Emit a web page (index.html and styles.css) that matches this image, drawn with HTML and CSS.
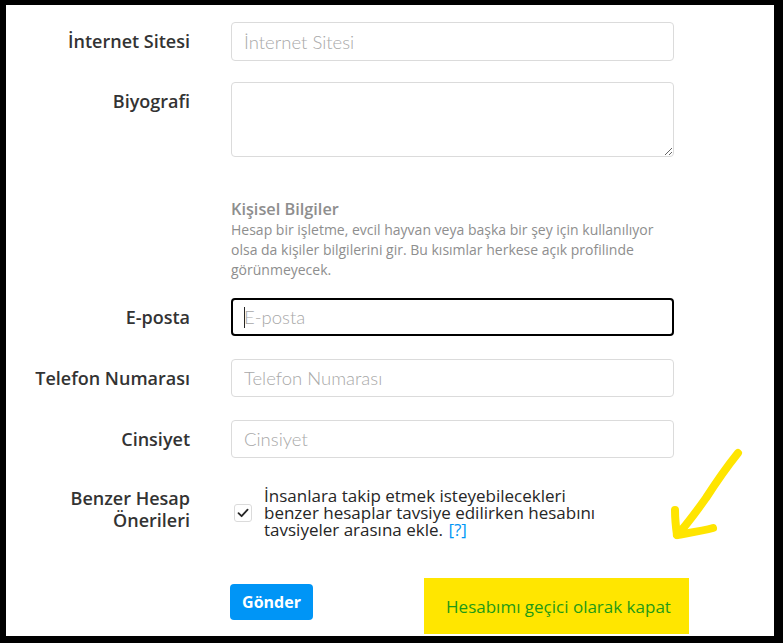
FILE: index.html
```html
<!DOCTYPE html>
<html lang="tr">
<head>
<meta charset="utf-8">
<title>Profili Düzenle</title>
<link rel="stylesheet" href="styles.css">
</head>
<body>
<div class="frame">
  <form class="form">
    <div class="row">
      <label class="lbl">İnternet Sitesi</label>
      <input class="inp" type="text" placeholder="İnternet Sitesi">
    </div>
    <div class="row row-bio">
      <label class="lbl">Biyografi</label>
      <textarea class="bio"></textarea>
    </div>
    <div class="row row-section">
      <div></div>
      <div class="section">
        <div class="sec-title">Kişisel Bilgiler</div>
        <div class="sec-desc">Hesap bir işletme, evcil hayvan veya başka bir şey için kullanılıyor olsa da kişiler bilgilerini gir. Bu kısımlar herkese açık profilinde görünmeyecek.</div>
      </div>
    </div>
    <div class="row row-mail">
      <label class="lbl">E-posta</label>
      <div class="field">
        <input class="inp inp-focus" type="text" placeholder="E-posta">
        <span class="caret"></span>
      </div>
    </div>
    <div class="row row-gap">
      <label class="lbl">Telefon Numarası</label>
      <input class="inp" type="text" placeholder="Telefon Numarası">
    </div>
    <div class="row row-gap">
      <label class="lbl">Cinsiyet</label>
      <input class="inp" type="text" placeholder="Cinsiyet">
    </div>
    <div class="row row-check">
      <label class="lbl lbl-multi">Benzer Hesap<br>Önerileri</label>
      <div class="check">
        <span class="box">
          <svg width="14" height="14" viewBox="0 0 14 14"><path d="M2.5 7.2 L5.6 10.2 L11.6 3.6" fill="none" stroke="#262626" stroke-width="1.8" stroke-linecap="round" stroke-linejoin="round"/></svg>
        </span>
        <span class="check-text">İnsanlara takip etmek isteyebilecekleri benzer hesaplar tavsiye edilirken hesabını tavsiyeler arasına ekle. <a class="help" href="#">[?]</a></span>
      </div>
    </div>
    <div class="row row-foot">
      <div></div>
      <div class="foot">
        <button class="send" type="button">Gönder</button>
        <a class="close" href="#">Hesabımı geçici olarak kapat</a>
      </div>
    </div>
  </form>
  <svg class="arrow" width="90" height="100" viewBox="0 0 90 100">
    <path d="M78 11 C66 26 55 42 46 56 C36 70 26 84 17 93" fill="none" stroke="#ffe500" stroke-width="8" stroke-linecap="round"/>
    <path d="M15 68 C15 78 16 86 17 93 C28 91 42 89 53 86" fill="none" stroke="#ffe500" stroke-width="8" stroke-linecap="round" stroke-linejoin="round"/>
  </svg>
</div>
</body>
</html>
```
FILE: styles.css
```css
html, body {
  margin: 0;
  padding: 0;
  background: #000;
}
body {
  width: 783px;
  height: 643px;
  overflow: hidden;
}
.frame {
  position: relative;
  margin: 5px 9px 0 6px;
  height: 631px;
  background: #fff;
  font-family: "Open Sans", "Noto Sans", sans-serif;
  color: #262626;
}
.form {
  padding-top: 17px;
}
.row {
  display: grid;
  grid-template-columns: 184px 443px;
  column-gap: 41px;
  align-items: start;
}
.lbl {
  font-size: 18px;
  font-weight: 600;
  text-align: right;
  line-height: 39px;
  color: #333;
}
.inp {
  box-sizing: border-box;
  width: 443px;
  height: 39px;
  margin: 0;
  padding: 0 12px;
  border: 1px solid #dbdbdb;
  border-radius: 4px;
  background: #fff;
  font-family: "Lato", sans-serif;
  font-weight: 300;
  font-size: 18.5px;
  color: #262626;
  outline: none;
}
.inp::placeholder {
  color: #a8a8a8;
}
.row-bio {
  margin-top: 21px;
}
.bio {
  box-sizing: border-box;
  width: 443px;
  height: 75px;
  margin: 0;
  border: 1px solid #dbdbdb;
  border-radius: 4px;
  display: block;
}
.row-section {
  margin-top: 41px;
}
.sec-title {
  font-size: 16.3px;
  font-weight: 600;
  line-height: 22px;
  color: #8e8e8e;
}
.sec-desc {
  font-size: 14px;
  line-height: 20px;
  color: #8e8e8e;
}
.row-mail {
  margin-top: 18px;
}
.field {
  position: relative;
}
.inp-focus {
  height: 38px;
  border: 2px solid #000;
  padding-left: 11px;
}
.caret {
  position: absolute;
  left: 13px;
  top: 9px;
  width: 1px;
  height: 21px;
  background: #262626;
}
.row-gap {
  margin-top: 22px;
}
.row-gap .inp {
  height: 38px;
}
.row-check {
  margin-top: 28px;
}
.lbl-multi {
  line-height: 22px;
  padding-top: 0;
}
.check {
  display: flex;
  align-items: center;
  gap: 12px;
  padding-left: 3px;
}
.box {
  flex: none;
  box-sizing: border-box;
  width: 18px;
  height: 18px;
  border: 1px solid #dbdbdb;
  border-radius: 3px;
  display: flex;
  align-items: center;
  justify-content: center;
}
.check-text {
  font-size: 17px;
  line-height: 17px;
  width: 350px;
}
.help {
  color: #0095f6;
  text-decoration: none;
  margin-left: 1px;
}
.row-foot {
  margin-top: 40px;
}
.foot {
  display: flex;
  align-items: flex-start;
  margin-left: -1px;
}
.send {
  flex: none;
  width: 83px;
  height: 36px;
  margin-top: 6px;
  border: 0;
  border-radius: 4px;
  background: #0095f6;
  color: #fff;
  font-family: "Open Sans", sans-serif;
  font-weight: 700;
  font-size: 16px;
  padding: 0;
}
.close {
  flex: none;
  box-sizing: border-box;
  width: 265px;
  height: 56px;
  margin-left: 111px;
  background: #ffe600;
  color: #1f9a16;
  font-size: 17px;
  font-weight: 400;
  text-decoration: none;
  display: flex;
  align-items: center;
  justify-content: center;
  padding-left: 4px;
}
.arrow {
  position: absolute;
  left: 654px;
  top: 437px;
}
```
